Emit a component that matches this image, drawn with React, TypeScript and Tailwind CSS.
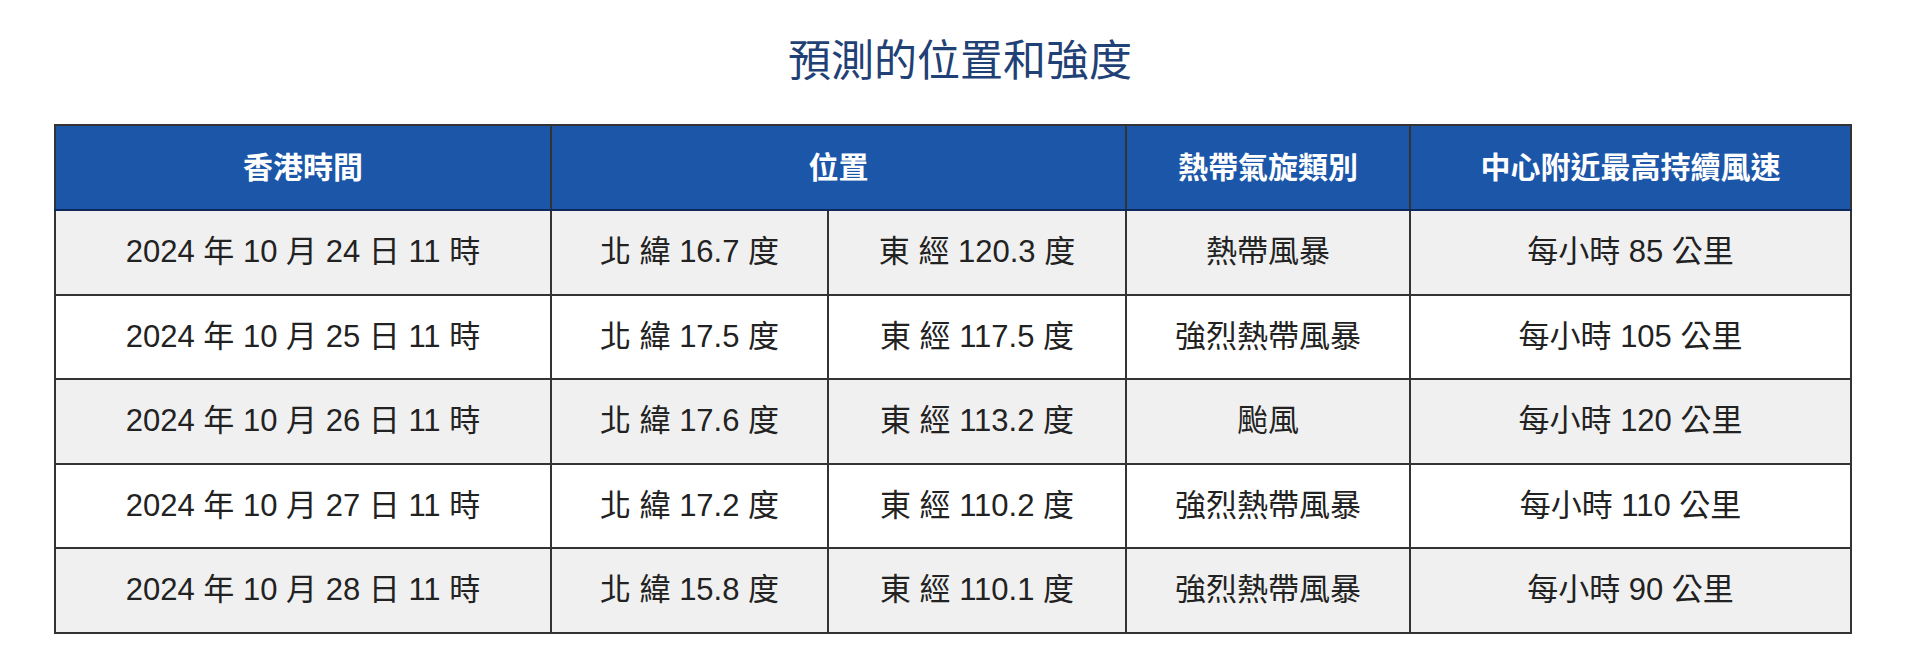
import React from 'react';

interface ForecastRow {
  time: string;
  lat: string;
  lon: string;
  category: string;
  wind: string;
}

const rows: ForecastRow[] = [
  { time: '2024 年 10 月 24 日 11 時', lat: '北 緯 16.7 度', lon: '東 經 120.3 度', category: '熱帶風暴', wind: '每小時 85 公里' },
  { time: '2024 年 10 月 25 日 11 時', lat: '北 緯 17.5 度', lon: '東 經 117.5 度', category: '強烈熱帶風暴', wind: '每小時 105 公里' },
  { time: '2024 年 10 月 26 日 11 時', lat: '北 緯 17.6 度', lon: '東 經 113.2 度', category: '颱風', wind: '每小時 120 公里' },
  { time: '2024 年 10 月 27 日 11 時', lat: '北 緯 17.2 度', lon: '東 經 110.2 度', category: '強烈熱帶風暴', wind: '每小時 110 公里' },
  { time: '2024 年 10 月 28 日 11 時', lat: '北 緯 15.8 度', lon: '東 經 110.1 度', category: '強烈熱帶風暴', wind: '每小時 90 公里' },
];

const cell = 'border-2 border-[#333] text-center align-middle';

export default function App() {
  return (
    <div
      className="w-[1920px] h-[672px] bg-white pt-[36px]"
      style={{ fontFamily: '"Liberation Sans", "Noto Sans CJK TC", sans-serif' }}
    >
      <h1 className="text-center text-[43px] leading-[50px] text-[#1f4175] font-normal">
        預測的位置和強度
      </h1>

      <table className="ml-[54px] mt-[38px] w-[1796px] border-collapse table-fixed">
        <colgroup>
          <col className="w-[496px]" />
          <col className="w-[277px]" />
          <col className="w-[298px]" />
          <col className="w-[284px]" />
          <col className="w-[441px]" />
        </colgroup>
        <thead>
          <tr className="h-[85px] bg-[#1b56a8] text-white text-[30px] font-bold">
            <th className={`${cell} border-b-[#0f2a5a]`}>香港時間</th>
            <th className={`${cell} border-b-[#0f2a5a]`} colSpan={2}>位置</th>
            <th className={`${cell} border-b-[#0f2a5a]`}>熱帶氣旋類別</th>
            <th className={`${cell} border-b-[#0f2a5a]`}>中心附近最高持續風速</th>
          </tr>
        </thead>
        <tbody className="text-[31px] text-[#222]">
          {rows.map((r, i) => (
            <tr key={r.time} className={`h-[84.6px] ${i % 2 === 0 ? 'bg-[#f0f0f0]' : 'bg-white'}`}>
              <td className={cell}>{r.time}</td>
              <td className={cell}>{r.lat}</td>
              <td className={cell}>{r.lon}</td>
              <td className={cell}>{r.category}</td>
              <td className={cell}>{r.wind}</td>
            </tr>
          ))}
        </tbody>
      </table>
    </div>
  );
}
